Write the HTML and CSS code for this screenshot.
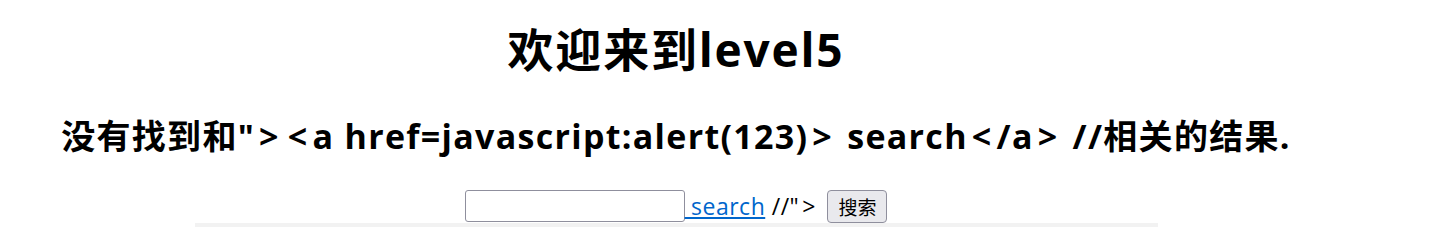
FILE: index.html
```html
<!DOCTYPE html>
<html lang="zh-CN">
<head>
    <meta charset="UTF-8">
    <title>level5</title>
    <link rel="stylesheet" href="styles.css">
</head>
<body>
    <h1 class="title">欢迎来到level5</h1>
    <h2 class="result">没有找到和"<span class="gl">&gt;</span><span class="gl">&lt;</span>a href=javascript:alert(123)<span class="gl">&gt;</span> search<span class="gl">&lt;</span>/a<span class="gl">&gt;</span> //相关的结果.</h2>
    <div class="search-row">
        <form class="search-form" action="level5.php" method="GET">
            <input class="keyword" name="keyword" value=""><a class="search-link" href="#"> search</a> //"<span class="gl">&gt;</span>
            <input class="submit" type="submit" name="submit" value="搜索">
        </form>
    </div>
    <div class="picture-wrap">
        <div class="picture"></div>
    </div>
</body>
</html>
```

FILE: styles.css
```css
/* base */
body {
    width: 1330px;
    margin: 0 0 0 11px;
    font-family: 'Open Sans', 'Noto Sans CJK SC', sans-serif;
    color: #000;
    background: #fff;
}

.title {
    text-align: center;
    font-size: 46px;
    font-weight: 700;
    letter-spacing: 1.8px;
    line-height: 60px;
    margin: 19px 0 0;
}

.result {
    text-align: center;
    font-size: 34px;
    font-weight: 700;
    letter-spacing: 1.3px;
    line-height: 46px;
    margin: 34px 0 0;
}

/* the < > glyphs sit wider apart in the original font */
.gl {
    margin: 0 4px;
}

/* search form */
.search-row {
    text-align: center;
    margin-top: 30px;
}

.search-form {
    margin: 0;
    font-size: 23px;
    letter-spacing: 0.5px;
    line-height: 34px;
}

.search-form .gl {
    margin: 0 3px;
}

.keyword {
    width: 214px;
    height: 28px;
    padding: 1px 2px;
    border: 1px solid #8f8f9d;
    border-radius: 3px;
    font-size: 18px;
    vertical-align: bottom;
    margin-bottom: 1px;
}

.search-link {
    color: #0066cc;
}

.submit {
    font-family: 'Noto Sans CJK SC', sans-serif;
    font-size: 19px;
    letter-spacing: 0;
    height: 33px;
    padding: 0 10px;
    border: 1px solid #8f8f9d;
    border-radius: 4px;
    background: #e9e9ed;
    color: #000;
    vertical-align: bottom;
    margin-left: 2px;
}

.picture-wrap {
    display: flex;
    justify-content: center;
}

.picture {
    width: 963px;
    height: 20px;
    background: #f2f2f2;
}
```
